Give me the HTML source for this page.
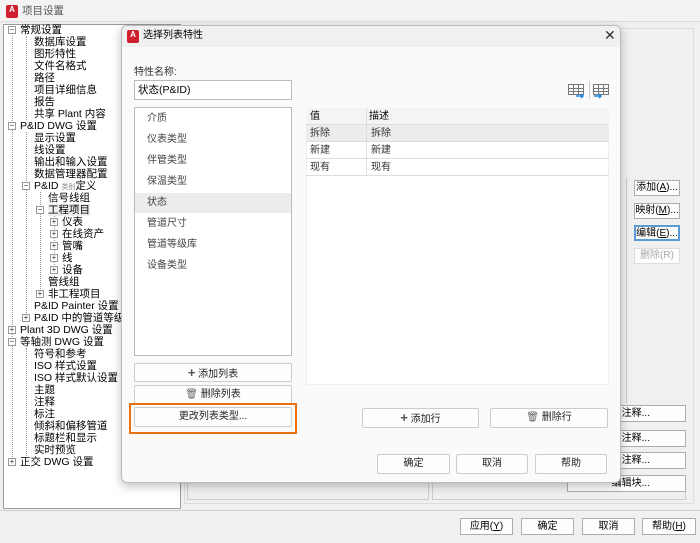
<!DOCTYPE html>
<html><head><meta charset="utf-8"><style>
*{margin:0;padding:0;box-sizing:border-box}
body{width:700px;height:543px;background:#f0f0f0;font-family:"Liberation Sans","Noto Sans CJK SC",sans-serif;font-size:10px;color:#000;position:relative;overflow:hidden}
.a{position:absolute}
.t{position:absolute;white-space:nowrap;font-size:10.5px;line-height:12px}
.ex{position:absolute;width:8px;height:8px;border:1px solid #999;background:#fff;font-size:8px;line-height:6px;text-align:center;color:#333}
.vl{position:absolute;border-left:1px dotted #999}
.btn{position:absolute;border:1px solid #ccc;background:#fdfdfd;border-radius:2px;text-align:center;font-size:10px;color:#222}
.bb{position:absolute;border:1px solid #adadad;background:#fdfdfd;text-align:center;font-size:10px}
.logo{position:absolute;width:12px;height:13px;background:#d0202f;border-radius:2px;color:#fff;font-size:8px;font-weight:bold;text-align:center;line-height:10px}
</style></head><body>
<div class="a" style="left:0;top:0;width:700px;height:22px;background:#f3f3f3;border-bottom:1px solid #ddd"></div>
<div class="logo" style="left:6px;top:5px">A</div>
<div class="t" style="left:22px;top:5px;color:#555">项目设置</div>
<div class="a" style="left:3px;top:24px;width:178px;height:485px;background:#fff;border:1px solid #999"></div>
<div class="a" style="left:187px;top:478px;width:242px;height:22px;border:1px solid #ccc"></div>
<div class="a" style="left:432px;top:478px;width:254px;height:22px;border:1px solid #ccc"></div>
<div class="a" style="left:184px;top:28px;width:510px;height:476px;border:1px solid #ddd"></div>
<div class="a" style="left:626px;top:178px;width:60px;height:225px;border-left:1px solid #ccc"></div>
<div class="bb" style="left:634px;top:180px;width:46px;height:16px;line-height:14px">添加(<u>A</u>)...</div>
<div class="bb" style="left:634px;top:203px;width:46px;height:16px;line-height:14px">映射(<u>M</u>)...</div>
<div class="bb" style="left:634px;top:225px;width:46px;height:16px;line-height:13px;border:2px solid #5b9bd5">编辑(<u>E</u>)...</div>
<div class="bb" style="left:634px;top:248px;width:46px;height:16px;line-height:14px;color:#aaa;border-color:#ddd">删除(R)</div>
<div class="bb" style="left:600px;top:405px;width:86px;height:17px;line-height:15px;text-align:right;padding-right:35px">注释...</div>
<div class="bb" style="left:600px;top:430px;width:86px;height:17px;line-height:15px;text-align:right;padding-right:35px">注释...</div>
<div class="bb" style="left:600px;top:452px;width:86px;height:17px;line-height:15px;text-align:right;padding-right:35px">注释...</div>
<div class="bb" style="left:567px;top:475px;width:119px;height:17px;line-height:15px;text-align:right;padding-right:35px">编辑块...</div>
<div class="a" style="left:0;top:510px;width:700px;height:1px;background:#ccc"></div>
<div class="bb" style="left:460px;top:518px;width:53px;height:17px;line-height:15px">应用(<u>Y</u>)</div>
<div class="bb" style="left:521px;top:518px;width:53px;height:17px;line-height:15px">确定</div>
<div class="bb" style="left:582px;top:518px;width:53px;height:17px;line-height:15px">取消</div>
<div class="bb" style="left:642px;top:518px;width:54px;height:17px;line-height:15px">帮助(<u>H</u>)</div>

<div class="vl" style="left:12px;top:36px;height:427px"></div>
<div class="vl" style="left:26px;top:36px;height:84px"></div>
<div class="vl" style="left:26px;top:132px;height:187px"></div>
<div class="vl" style="left:26px;top:348px;height:108px"></div>
<div class="vl" style="left:40px;top:192px;height:103px"></div>
<div class="vl" style="left:54px;top:216px;height:55px"></div>
<div class="ex" style="left:8px;top:26px">−</div><div class="t" style="left:20px;top:24px">常规设置</div>
<div class="t" style="left:34px;top:36px">数据库设置</div>
<div class="t" style="left:34px;top:48px">图形特性</div>
<div class="t" style="left:34px;top:60px">文件名格式</div>
<div class="t" style="left:34px;top:72px">路径</div>
<div class="t" style="left:34px;top:84px">项目详细信息</div>
<div class="t" style="left:34px;top:96px">报告</div>
<div class="t" style="left:34px;top:108px">共享 Plant 内容</div>
<div class="ex" style="left:8px;top:122px">−</div><div class="t" style="left:20px;top:120px">P&amp;ID DWG 设置</div>
<div class="t" style="left:34px;top:132px">显示设置</div>
<div class="t" style="left:34px;top:144px">线设置</div>
<div class="t" style="left:34px;top:156px">输出和输入设置</div>
<div class="t" style="left:34px;top:168px">数据管理器配置</div>
<div class="ex" style="left:22px;top:182px">−</div><div class="t" style="left:34px;top:180px">P&amp;ID <span style="font-size:7px;color:#888">类别</span>定义</div>
<div class="t" style="left:48px;top:192px">信号线组</div>
<div class="ex" style="left:36px;top:206px">−</div><div class="t" style="left:48px;top:204px;background:#eee">工程项目</div>
<div class="ex" style="left:50px;top:218px">+</div><div class="t" style="left:62px;top:216px">仪表</div>
<div class="ex" style="left:50px;top:230px">+</div><div class="t" style="left:62px;top:228px">在线资产</div>
<div class="ex" style="left:50px;top:242px">+</div><div class="t" style="left:62px;top:240px">管嘴</div>
<div class="ex" style="left:50px;top:254px">+</div><div class="t" style="left:62px;top:252px">线</div>
<div class="ex" style="left:50px;top:266px">+</div><div class="t" style="left:62px;top:264px">设备</div>
<div class="t" style="left:48px;top:276px">管线组</div>
<div class="ex" style="left:36px;top:290px">+</div><div class="t" style="left:48px;top:288px">非工程项目</div>
<div class="t" style="left:34px;top:300px">P&amp;ID Painter 设置</div>
<div class="ex" style="left:22px;top:314px">+</div><div class="t" style="left:34px;top:312px">P&amp;ID 中的管道等级库</div>
<div class="ex" style="left:8px;top:326px">+</div><div class="t" style="left:20px;top:324px">Plant 3D DWG 设置</div>
<div class="ex" style="left:8px;top:338px">−</div><div class="t" style="left:20px;top:336px">等轴测 DWG 设置</div>
<div class="t" style="left:34px;top:348px">符号和参考</div>
<div class="t" style="left:34px;top:360px">ISO 样式设置</div>
<div class="t" style="left:34px;top:372px">ISO 样式默认设置</div>
<div class="t" style="left:34px;top:384px">主题</div>
<div class="t" style="left:34px;top:396px">注释</div>
<div class="t" style="left:34px;top:408px">标注</div>
<div class="t" style="left:34px;top:420px">倾斜和偏移管道</div>
<div class="t" style="left:34px;top:432px">标题栏和显示</div>
<div class="t" style="left:34px;top:444px">实时预览</div>
<div class="ex" style="left:8px;top:458px">+</div><div class="t" style="left:20px;top:456px">正交 DWG 设置</div>

<div class="a" style="left:121px;top:25px;width:500px;height:458px;background:#fafafa;border:1px solid #bbb;border-radius:6px;box-shadow:0 3px 10px rgba(0,0,0,.25)"></div>
<div class="a" style="left:122px;top:26px;width:498px;height:21px;background:#f0f0f0;border-radius:6px 6px 0 0"></div>
<div class="logo" style="left:127px;top:30px">A</div>
<div class="t" style="left:143px;top:30px;font-size:10px">选择列表特性</div>
<div class="t" style="left:604px;top:28px;font-size:14px;line-height:14px;color:#333">✕</div>
<div class="t" style="left:134px;top:67px;color:#333;font-size:10px">特性名称:</div>
<div class="a" style="left:134px;top:80px;width:158px;height:20px;background:#fff;border:1px solid #bbb;font-size:10.5px;line-height:18px;padding-left:3px">状态(P&amp;ID)</div>
<svg class="a" style="left:566px;top:80px" width="45" height="20" viewBox="0 0 45 20">
<g fill="none" stroke="#777" stroke-width="1"><rect x="2.5" y="4.5" width="15" height="10"/><path d="M7.5 4.5v10M12.5 4.5v10M2.5 8.5h15M2.5 11.5h15"/>
<rect x="27.5" y="4.5" width="15" height="10"/><path d="M32.5 4.5v10M37.5 4.5v10M27.5 8.5h15M27.5 11.5h15"/></g>
<path d="M10 16h7M15 14l2 2-2 2M28 16h7M33 14l2 2-2 2" stroke="#1e88e5" stroke-width="1.5" fill="none"/>
<path d="M23.5 1v18" stroke="#ccc"/></svg>
<div class="a" style="left:134px;top:107px;width:158px;height:249px;background:#fff;border:1px solid #bbb"></div>
<div class="a" style="left:135px;top:193px;width:156px;height:20px;background:#ececec"></div>
<div class="t" style="left:147px;top:113px;color:#444;font-size:10px">介质</div>
<div class="t" style="left:147px;top:134px;color:#444;font-size:10px">仪表类型</div>
<div class="t" style="left:147px;top:155px;color:#444;font-size:10px">伴管类型</div>
<div class="t" style="left:147px;top:176px;color:#444;font-size:10px">保温类型</div>
<div class="t" style="left:147px;top:197px;color:#444;font-size:10px">状态</div>
<div class="t" style="left:147px;top:218px;color:#444;font-size:10px">管道尺寸</div>
<div class="t" style="left:147px;top:239px;color:#444;font-size:10px">管道等级库</div>
<div class="t" style="left:147px;top:260px;color:#444;font-size:10px">设备类型</div>
<div class="a" style="left:306px;top:108px;width:303px;height:277px;background:#fff;border:1px solid #eee"></div>
<div class="a" style="left:306px;top:108px;width:303px;height:17px;background:#f4f4f4;border-bottom:1px solid #ddd"></div>
<div class="a" style="left:306px;top:125px;width:303px;height:17px;background:#ececec;border-bottom:1px solid #ddd"></div>
<div class="a" style="left:306px;top:142px;width:303px;height:17px;border-bottom:1px solid #ddd"></div>
<div class="a" style="left:306px;top:159px;width:303px;height:17px;border-bottom:1px solid #ddd"></div>
<div class="a" style="left:366px;top:108px;width:1px;height:68px;background:#ddd"></div>
<div class="t" style="left:310px;top:111px;font-size:10px">值</div><div class="t" style="left:369px;top:111px;font-size:10px">描述</div>
<div class="t" style="left:310px;top:128px;font-size:10px;color:#333">拆除</div><div class="t" style="left:371px;top:128px;font-size:10px;color:#333">拆除</div>
<div class="t" style="left:310px;top:145px;font-size:10px;color:#333">新建</div><div class="t" style="left:371px;top:145px;font-size:10px;color:#333">新建</div>
<div class="t" style="left:310px;top:162px;font-size:10px;color:#333">现有</div><div class="t" style="left:371px;top:162px;font-size:10px;color:#333">现有</div>
<div class="btn" style="left:134px;top:363px;width:158px;height:19px;line-height:17px"><b style="font-size:13px;color:#555">+</b> 添加列表</div>
<div class="btn" style="left:134px;top:385px;width:158px;height:19px;line-height:17px"><span style="color:#666">🗑</span> 删除列表</div>
<div class="a" style="left:129px;top:403px;width:168px;height:31px;border:2px solid #e8700f"></div>
<div class="btn" style="left:134px;top:407px;width:158px;height:20px;line-height:18px">更改列表类型...</div>
<div class="btn" style="left:362px;top:408px;width:117px;height:20px;line-height:18px"><b style="font-size:13px;color:#555">+</b> 添加行</div>
<div class="btn" style="left:490px;top:408px;width:118px;height:20px;line-height:18px"><span style="color:#666">🗑</span> 删除行</div>
<div class="btn" style="left:377px;top:454px;width:73px;height:20px;line-height:18px">确定</div>
<div class="btn" style="left:456px;top:454px;width:72px;height:20px;line-height:18px">取消</div>
<div class="btn" style="left:535px;top:454px;width:72px;height:20px;line-height:18px">帮助</div>
</body></html>
